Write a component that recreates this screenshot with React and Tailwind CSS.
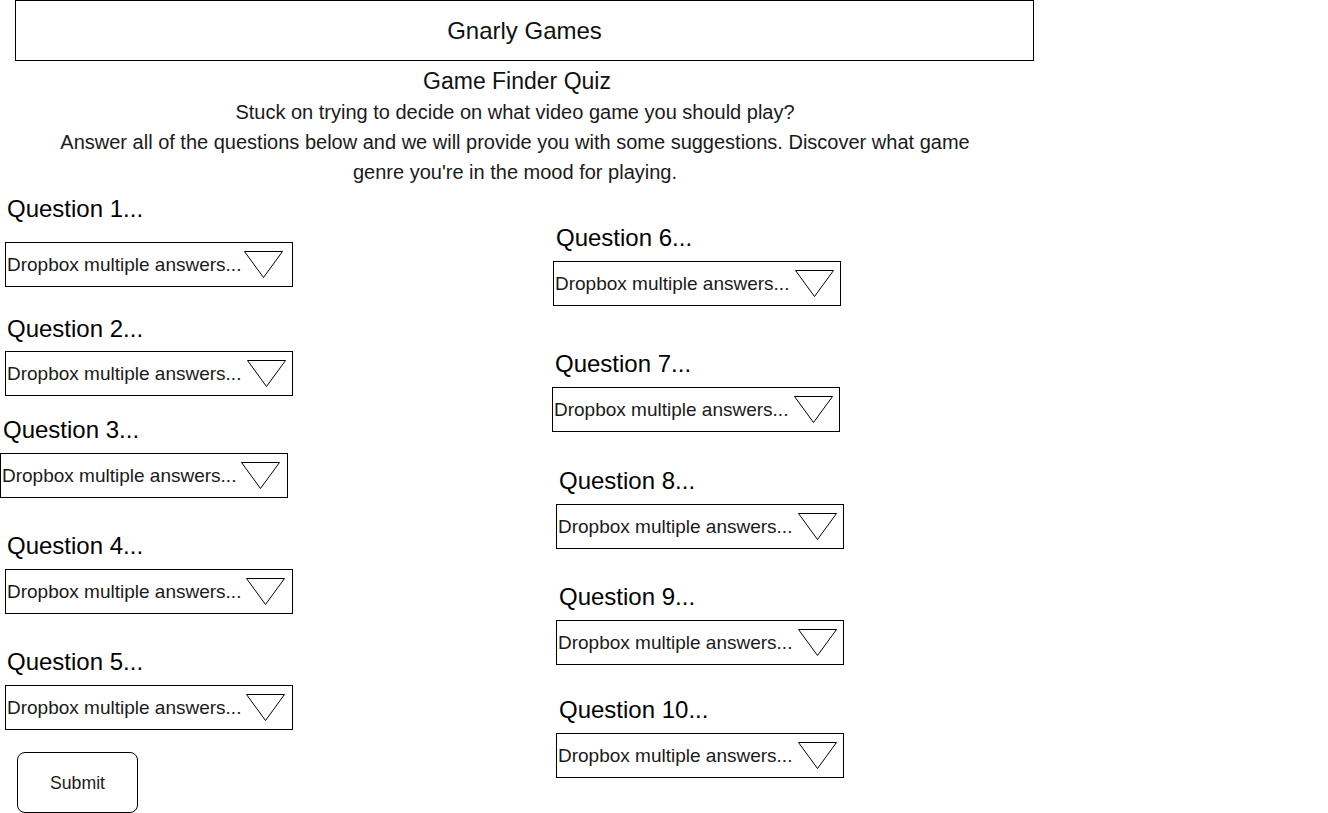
import React from "react";

function Triangle() {
  return (
    <svg width="39" height="27" viewBox="0 0 39 27" className="shrink-0">
      <polygon points="0.5,0.5 38.5,0.5 19.5,26.5" fill="none" stroke="#000" strokeWidth="1" />
    </svg>
  );
}

function Item({ label, labelMt, labelMl, boxMt, boxMl, triMr }) {
  return (
    <div className="flex flex-col items-start">
      <div
        className="text-[24px] leading-[28px] text-black whitespace-nowrap"
        style={{ marginTop: labelMt, marginLeft: labelMl }}
      >
        {label}
      </div>
      <div
        className="box-border w-[288px] h-[45px] border border-black flex items-center bg-white"
        style={{ marginTop: boxMt, marginLeft: boxMl }}
      >
        <span className="pl-[1px] text-[19px] leading-[22px] text-[#1a1a1a] whitespace-nowrap">
          Dropbox multiple answers...
        </span>
        <span className="ml-auto flex" style={{ marginRight: triMr }}>
          <Triangle />
        </span>
      </div>
    </div>
  );
}

export default function App() {
  const left = [
    { label: "Question 1...", labelMt: 8, labelMl: 7, boxMt: 19, boxMl: 5, triMr: 9 },
    { label: "Question 2...", labelMt: 28, labelMl: 7, boxMt: 8, boxMl: 5, triMr: 6 },
    { label: "Question 3...", labelMt: 20, labelMl: 3, boxMt: 9, boxMl: 0, triMr: 7 },
    { label: "Question 4...", labelMt: 34, labelMl: 7, boxMt: 9, boxMl: 5, triMr: 7 },
    { label: "Question 5...", labelMt: 34, labelMl: 7, boxMt: 9, boxMl: 5, triMr: 7 },
  ];
  const right = [
    { label: "Question 6...", labelMt: 37, labelMl: 4, boxMt: 9, boxMl: 1, triMr: 6 },
    { label: "Question 7...", labelMt: 44, labelMl: 3, boxMt: 9, boxMl: 0, triMr: 6 },
    { label: "Question 8...", labelMt: 35, labelMl: 7, boxMt: 9, boxMl: 4, triMr: 6 },
    { label: "Question 9...", labelMt: 34, labelMl: 7, boxMt: 9, boxMl: 4, triMr: 6 },
    { label: "Question 10...", labelMt: 31, labelMl: 7, boxMt: 9, boxMl: 4, triMr: 6 },
  ];
  return (
    <div
      className="w-[1328px] h-[813px] overflow-hidden bg-white text-black flex flex-col"
      style={{ fontFamily: '"Liberation Sans", Arial, sans-serif' }}
    >
      <div className="box-border ml-[15px] w-[1019px] h-[61px] border border-black flex items-center justify-center">
        <span className="text-[24px] leading-[28px] text-[#111]">Gnarly Games</span>
      </div>
      <div className="ml-[15px] w-[1000px] mt-[6px] text-center text-[23px] leading-[28px] text-[#111] pl-[4px]">
        Game Finder Quiz
      </div>
      <div className="ml-[15px] w-[1000px] mt-[2px] text-center text-[20px] leading-[30px] text-[#1a1a1a]">
        Stuck on trying to decide on what video game you should play?
        <br />
        Answer all of the questions below and we will provide you with some suggestions. Discover what game
        <br />
        genre you're in the mood for playing.
      </div>
      <div className="flex flex-row">
        <div className="w-[552px] flex flex-col items-start">
          {left.map((it) => (
            <Item key={it.label} {...it} />
          ))}
          <div className="box-border mt-[22px] ml-[17px] w-[121px] h-[61px] border border-black rounded-[8px] flex items-center justify-center">
            <span className="text-[17.7px] leading-[22px] text-[#1a1a1a]">Submit</span>
          </div>
        </div>
        <div className="flex flex-col items-start">
          {right.map((it) => (
            <Item key={it.label} {...it} />
          ))}
        </div>
      </div>
    </div>
  );
}
